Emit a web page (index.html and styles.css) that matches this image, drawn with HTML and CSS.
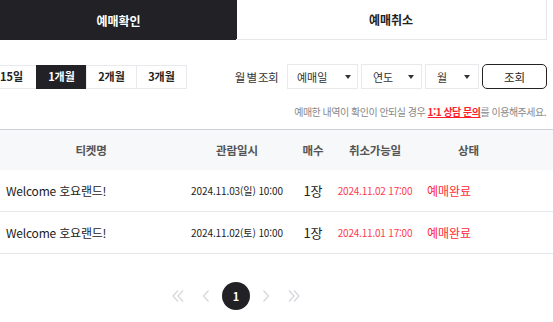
FILE: index.html
```html
<!DOCTYPE html>
<html lang="ko">
<head>
<meta charset="utf-8">
<link rel="stylesheet" href="styles.css">
</head>
<body>
<div class="page">
  <div class="tabs">
    <div class="tab tab-active">예매확인</div>
    <div class="tab">예매취소</div>
  </div>

  <div class="filters">
    <div class="periods">
      <button class="period">15일</button>
      <button class="period period-active">1개월</button>
      <button class="period">2개월</button>
      <button class="period">3개월</button>
    </div>
    <div class="monthly">
      <span class="monthly-label">월 별 조회</span>
      <div class="select select-type">예매일<span class="caret"></span></div>
      <div class="select select-year">연도<span class="caret"></span></div>
      <div class="select select-month">월<span class="caret"></span></div>
      <button class="search">조회</button>
    </div>
  </div>

  <p class="notice">예매한 내역이 확인이 안되실 경우 <a class="notice-link">1:1 상담 문의</a>를 이용해주세요.</p>

  <div class="table">
    <div class="row row-head">
      <div class="cell c-name">티켓명</div>
      <div class="cell c-date">관람일시</div>
      <div class="cell c-qty">매수</div>
      <div class="cell c-cancel">취소가능일</div>
      <div class="cell c-status">상태</div>
    </div>
    <div class="row">
      <div class="cell c-name">Welcome 호요랜드!</div>
      <div class="cell c-date">2024.11.03(일) 10:00</div>
      <div class="cell c-qty">1장</div>
      <div class="cell c-cancel">2024.11.02 17:00</div>
      <div class="cell c-status">예매완료</div>
    </div>
    <div class="row">
      <div class="cell c-name">Welcome 호요랜드!</div>
      <div class="cell c-date">2024.11.02(토) 10:00</div>
      <div class="cell c-qty">1장</div>
      <div class="cell c-cancel">2024.11.01 17:00</div>
      <div class="cell c-status">예매완료</div>
    </div>
  </div>

  <div class="pager">
    <span class="pg-arrow"><svg width="14" height="14" viewBox="0 0 14 14"><path d="M7 1.5 L2 7 L7 12.5 M12 1.5 L7 7 L12 12.5" fill="none" stroke="#d4d5da" stroke-width="1.2"/></svg></span>
    <span class="pg-arrow"><svg width="14" height="14" viewBox="0 0 14 14"><path d="M9.5 1.5 L4.5 7 L9.5 12.5" fill="none" stroke="#d4d5da" stroke-width="1.2"/></svg></span>
    <span class="pg-num">1</span>
    <span class="pg-arrow"><svg width="14" height="14" viewBox="0 0 14 14"><path d="M4.5 1.5 L9.5 7 L4.5 12.5" fill="none" stroke="#d4d5da" stroke-width="1.2"/></svg></span>
    <span class="pg-arrow"><svg width="14" height="14" viewBox="0 0 14 14"><path d="M2 1.5 L7 7 L2 12.5 M7 1.5 L12 7 L7 12.5" fill="none" stroke="#d4d5da" stroke-width="1.2"/></svg></span>
  </div>
</div>
</body>
</html>
```

FILE: styles.css
```css
* { box-sizing: border-box; }
html, body { margin: 0; padding: 0; background: #fff; }
body {
  font-family: "Noto Sans CJK KR", "Noto Sans", sans-serif;
  color: #222;
  width: 553px;
  overflow: hidden;
}
.page { width: 553px; }

.tabs { display: flex; height: 40px; }
.tab {
  display: flex; align-items: center; justify-content: center;
  font-size: 12px; font-weight: 700; color: #222;
  width: 311px;
  border-right: 1px solid #e6e7eb;
  border-bottom: 1px solid #e6e7eb;
  margin-left: -1px;
}
.tab-active {
  width: 237px; margin-left: 0;
  background: #222226; color: #fff; border: none;
}

.filters {
  display: flex; justify-content: space-between; align-items: center;
  margin-top: 24px;
  padding-right: 6px;
}
.periods { display: flex; margin-left: -13px; }
.period {
  width: 51px; height: 24px; padding: 0;
  background: #fff; border: 1px solid #e8e9ed; margin-left: -1px;
  font-family: inherit; font-size: 11px; font-weight: 700; color: #222;
  line-height: 1;
}
.period-active { background: #222226; color: #fff; border-color: #222226; }

.monthly { display: flex; align-items: center; }
.monthly-label { font-size: 11.5px; color: #333; margin-right: 9px; letter-spacing: -0.6px; word-spacing: -1px; }
.select {
  height: 25px; border: 1px solid #e8e9ed; margin-right: 3px;
  display: flex; align-items: center; justify-content: space-between;
  padding: 0 6px 0 9px;
  font-size: 11px; color: #333;
}
.select-type { width: 71px; }
.select-year { width: 61px; padding-left: 11px; padding-right: 7px; }
.select-month { width: 54px; margin-right: 3px; padding-left: 11px; padding-right: 8px; }
.caret {
  width: 0; height: 0;
  border-left: 3.5px solid transparent; border-right: 3.5px solid transparent;
  border-top: 4px solid #333;
}
.search {
  width: 65px; height: 25px; margin-left: 0;
  background: #fff; border: 1px solid #222; border-radius: 5px;
  font-family: inherit; font-size: 11.5px; color: #222; padding: 0;
}

.notice {
  margin: 15px 7px 0 0;
  text-align: right;
  font-size: 10px; color: #888;
  letter-spacing: -0.5px;
  line-height: 16px;
}
.notice-link { color: #ff1e2d; font-weight: 700; text-decoration: underline; }

.table { margin-top: 9px; border-top: 1px solid #cdd0d6; }
.row {
  display: grid;
  grid-template-columns: 176px 122px 30px 94px 131px;
  height: 42px; align-items: center;
  border-bottom: 1px solid #e6e7eb;
}
.row-head { background: #f7f8fa; height: 40px; border-bottom: none; }
.row-head .cell { text-align: center; font-size: 11.5px; font-weight: 700; color: #555; }
.row-head .c-status { text-align: left; padding-left: 36px; }
.cell { font-size: 11px; white-space: nowrap; }
.c-name { padding-left: 6px; font-size: 12px; font-weight: 400; color: #222; letter-spacing: -0.2px; }
.c-date { text-align: center; font-size: 10px; color: #222; letter-spacing: -0.1px; }
.c-qty { text-align: center; font-size: 13px; color: #222; }
.c-cancel { text-align: center; font-size: 10px; color: #ff3b4a; letter-spacing: -0.2px; }
.c-status { padding-left: 5px; font-size: 12px; color: #ff2a3a; }

.pager {
  display: flex; justify-content: center; align-items: center;
  margin-top: 28px; padding-right: 81px;
}
.pg-arrow { display: flex; justify-content: center; width: 28px; height: 14px; }
.pg-num {
  width: 28px; height: 28px; border-radius: 50%;
  background: #222226; color: #fff;
  display: flex; align-items: center; justify-content: center;
  font-size: 11px; font-weight: 700;
  margin: 0 2px;
}
```
